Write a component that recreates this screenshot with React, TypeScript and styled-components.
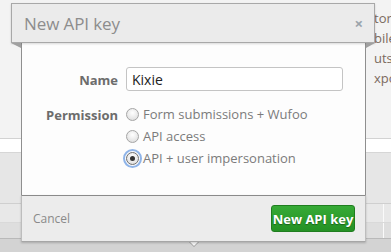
import { useState } from "react"
import styled, { createGlobalStyle } from "styled-components"

const GlobalStyle = createGlobalStyle`
  html, body {
    margin: 0;
    padding: 0;
    background: #f2f2f2;
    font-family: "Open Sans", "Liberation Sans", sans-serif;
  }
`

const Page = styled.div`
  position: relative;
  width: 391px;
  height: 252px;
  overflow: hidden;
`

const Backdrop = styled.div`
  display: flex;
  flex-direction: column;
  height: 100%;
`

const TopArea = styled.div`
  height: 138px;
  background: #f3f3f3;
  display: flex;
  justify-content: flex-end;
`

const SideMenu = styled.ul`
  list-style: none;
  margin: 0;
  padding: 10px 0 0;
  width: 17px;
  display: flex;
  flex-direction: column;
  gap: 3px;
`

const SideItem = styled.li`
  font-size: 13px;
  line-height: 17px;
  color: #7b6a5e;
  white-space: nowrap;
`

interface BandProps {
  h: number
  bg: string
  line?: string
}

const Band = styled.div<BandProps>`
  height: ${({ h }) => h}px;
  flex: ${({ h }) => (h ? "none" : "1")};
  background: ${({ bg }) => bg};
  border-top: 1px solid ${({ line }) => line || "transparent"};
  display: flex;
  justify-content: flex-end;
`

const BandDivider = styled.span`
  width: 1px;
  margin-right: 7px;
  background: #fafafa;
`

const Notch = styled.div`
  position: absolute;
  left: 189px;
  top: 241px;
  width: 0;
  height: 0;
  border-left: 5px solid transparent;
  border-right: 5px solid transparent;
  border-top: 5px solid #f7f7f7;
  filter: drop-shadow(0 1px 0 #9a9a9a);
`

const Modal = styled.div`
  position: absolute;
  left: 11px;
  top: 3px;
  width: 364px;
  display: flex;
  flex-direction: column;
`

const Header = styled.div`
  position: relative;
  height: 38px;
  display: flex;
  align-items: center;
  justify-content: space-between;
  padding: 0 11px 0 12px;
  background: #ebebeb;
  border: 1px solid #a8a8a8;
  box-shadow: 0 1px 2px rgba(0, 0, 0, 0.15);
  z-index: 2;
`

const Title = styled.h2`
  margin: 0;
  font-size: 17px;
  font-weight: 400;
  color: #8d8d8d;
  letter-spacing: -0.1px;
`

const Close = styled.span`
  font-size: 15px;
  font-weight: 700;
  color: #9aa3ab;
  line-height: 1;
`

interface FoldProps {
  side: "left" | "right"
}

const Fold = styled.span<FoldProps>`
  position: absolute;
  top: 39px;
  ${({ side }) => (side === "left" ? "left: -1px;" : "right: -1px;")}
  width: 0;
  height: 0;
  border-top: 5px solid #a0a0a0;
  ${({ side }) =>
    side === "left"
      ? "border-left: 10px solid transparent;"
      : "border-right: 9px solid transparent;"}
`

const Body = styled.div`
  margin: 0 9px 0 10px;
  height: 152px;
  background: #fdfdfd;
  border-left: 1px solid #8f8f8f;
  border-right: 1px solid #8f8f8f;
  box-sizing: border-box;
  padding-top: 24px;
  display: flex;
  flex-direction: column;
  gap: 14px;
`

const Row = styled.div`
  display: grid;
  grid-template-columns: 96px 1fr;
  column-gap: 8px;
  align-items: start;
`

interface LabelProps {
  pad: number
}

const Label = styled.label<LabelProps>`
  text-align: right;
  font-size: 13px;
  font-weight: 700;
  color: #6c6c6c;
  padding-top: ${({ pad }) => pad}px;
`

const TextInput = styled.input`
  width: 217px;
  height: 24px;
  box-sizing: border-box;
  border: 1px solid #c4c4c4;
  border-radius: 3px;
  padding: 0 5px;
  font-family: inherit;
  font-size: 14px;
  color: #222;
  background: #fff;
  outline: none;
`

const Options = styled.div`
  display: flex;
  flex-direction: column;
  gap: 4px;
`

const Option = styled.label`
  display: flex;
  align-items: center;
  gap: 4px;
  height: 18px;
  font-size: 13px;
  color: #7b7b7b;
`

interface RadioProps {
  checked: boolean
}

const Radio = styled.span<RadioProps>`
  box-sizing: border-box;
  width: 13px;
  height: 13px;
  border-radius: 50%;
  border: 1px solid #a5a5a5;
  background: radial-gradient(circle at 50% 35%, #ffffff 0%, #e4e4e4 70%, #cfcfcf 100%);
  display: grid;
  place-items: center;
  outline: ${({ checked }) => (checked ? "2px solid #8fb4e8" : "none")};
  outline-offset: 1px;
  border-color: ${({ checked }) => (checked ? "#6f6f6f" : "#a5a5a5")};

  &::after {
    content: "";
    width: 5px;
    height: 5px;
    border-radius: 50%;
    background: #333;
    display: ${({ checked }) => (checked ? "block" : "none")};
  }
`

const Footer = styled.div`
  margin: 0 9px 0 10px;
  height: 47px;
  box-sizing: border-box;
  display: flex;
  align-items: center;
  justify-content: space-between;
  padding: 0 10px 0 11px;
  background: #ececec;
  border-top: 1px solid #8a8a8a;
  border-left: 1px solid #bdbdbd;
  border-right: 1px solid #bdbdbd;
  border-bottom: 1px solid #a6a6a6;
  box-shadow: 0 1px 2px rgba(0, 0, 0, 0.2);
`

const CancelLink = styled.a`
  font-size: 12px;
  color: #8a8a8a;
  text-decoration: none;
  cursor: pointer;
`

const PrimaryButton = styled.button`
  width: 84px;
  height: 27px;
  border: 1px solid #1f7d1f;
  border-radius: 3px;
  background: linear-gradient(#36aa36, #249124);
  color: #fff;
  font-family: inherit;
  font-size: 13px;
  font-weight: 700;
  text-shadow: 0 1px 1px rgba(0, 0, 0, 0.35);
  padding: 0;
  cursor: pointer;
`

const permissions = [
  "Form submissions + Wufoo",
  "API access",
  "API + user impersonation",
]

export default function App() {
  const [name, setName] = useState("Kixie")
  const [perm, setPerm] = useState(2)

  return (
    <Page>
      <GlobalStyle />
      <Backdrop>
        <TopArea>
          <SideMenu>
            <SideItem>tor</SideItem>
            <SideItem>bile</SideItem>
            <SideItem>utsh</SideItem>
            <SideItem>xpor</SideItem>
          </SideMenu>
        </TopArea>
        <Band h={13} bg="#ffffff" line="#d2d2d2" />
        <Band h={50} bg="#e6e6e6" line="#d6d6d6" />
        <Band h={18} bg="#e8e8e8" line="#cfcfcf">
          <BandDivider />
        </Band>
        <Band h={15} bg="#dedede" line="#d9d9d9">
          <BandDivider />
        </Band>
        <Band h={0} bg="#d3d3d3" line="#b9b9b9" />
      </Backdrop>
      <Notch />

      <Modal>
        <Header>
          <Title>New API key</Title>
          <Close>×</Close>
          <Fold side="left" />
          <Fold side="right" />
        </Header>
        <Body>
          <Row>
            <Label pad={4}>Name</Label>
            <TextInput value={name} onChange={(e) => setName(e.target.value)} />
          </Row>
          <Row>
            <Label pad={1}>Permission</Label>
            <Options>
              {permissions.map((p, i) => (
                <Option key={p} onClick={() => setPerm(i)}>
                  <Radio checked={perm === i} />
                  {p}
                </Option>
              ))}
            </Options>
          </Row>
        </Body>
        <Footer>
          <CancelLink>Cancel</CancelLink>
          <PrimaryButton>New API key</PrimaryButton>
        </Footer>
      </Modal>
    </Page>
  )
}
